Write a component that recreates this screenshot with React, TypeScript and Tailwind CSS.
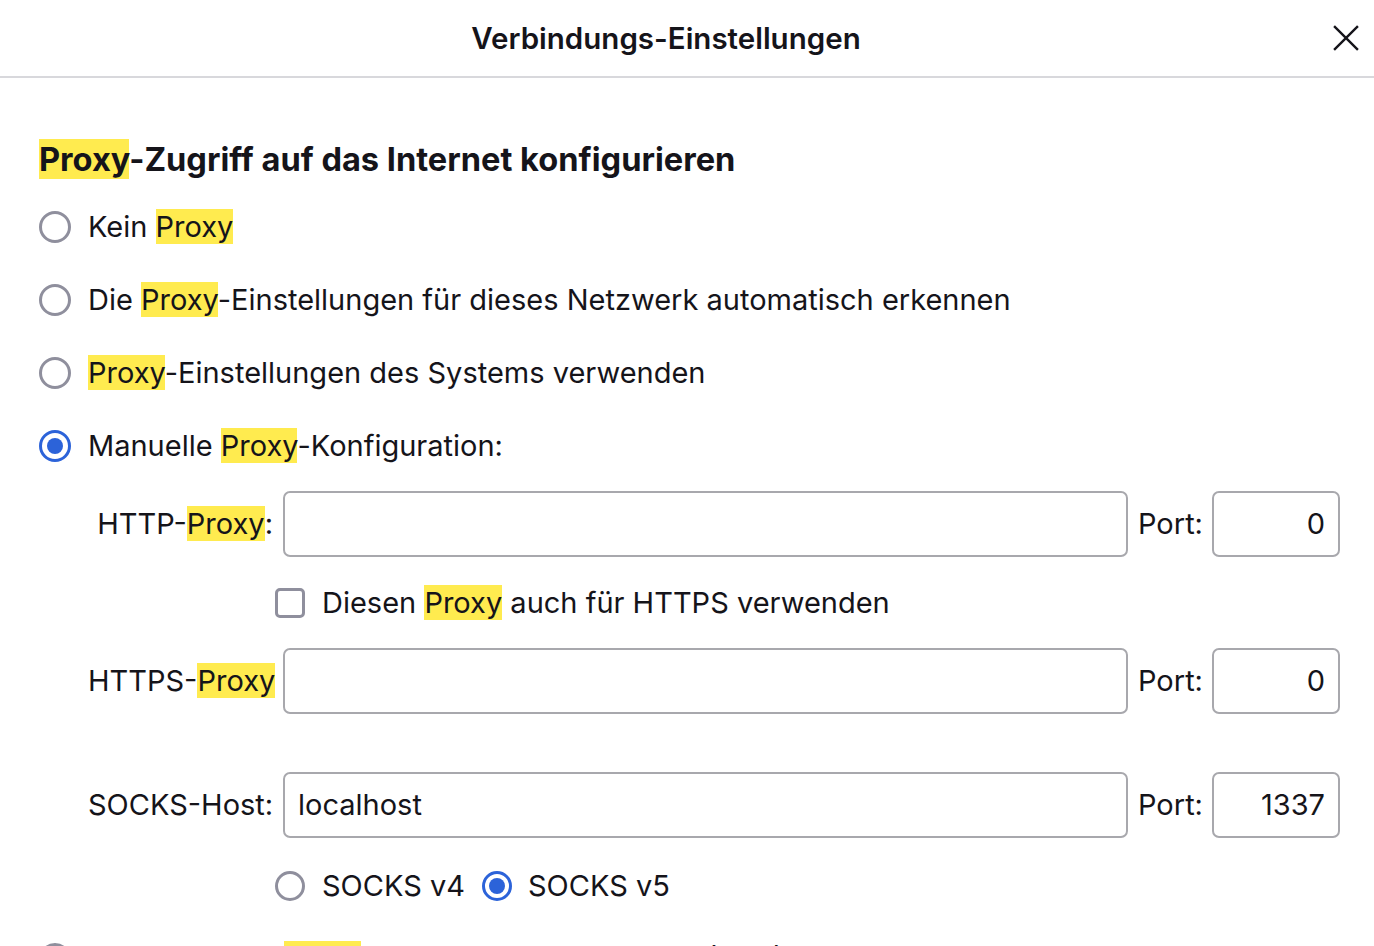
const Mark = ({ children }: { children: React.ReactNode }) => (
  <span className="bg-[#ffeb4f]">{children}</span>
);

const Radio = ({ checked = false, small = false }: { checked?: boolean; small?: boolean }) => (
  <span
    className={
      (small ? "w-[30px] h-[30px] " : "w-[32px] h-[32px] ") +
      "shrink-0 rounded-full flex items-center justify-center border-[3px] " +
      (checked ? "border-[#2c63d9]" : "border-[#8f8f9d]")
    }
  >
    {checked && <span className="w-[16px] h-[16px] rounded-full bg-[#2c63d9]" />}
  </span>
);

const TextBox = ({ value = "", align = "left" }: { value?: string; align?: "left" | "right" }) => (
  <div
    className={
      "h-[66px] border-2 border-[#a8a8ad] rounded-[7px] flex items-center px-[13px] " +
      (align === "right" ? "justify-end" : "justify-start")
    }
  >
    <span>{value}</span>
  </div>
);

const ProxyRow = ({ label, host = "", port }: { label: React.ReactNode; host?: string; port: string }) => (
  <div className="flex items-center gap-[10px]">
    <div className="w-[185px] text-right whitespace-nowrap">{label}</div>
    <div className="flex-1">
      <TextBox value={host} />
    </div>
    <div className="w-[64px] whitespace-nowrap">Port:</div>
    <div className="w-[128px]">
      <TextBox value={port} align="right" />
    </div>
  </div>
);

export default function App() {
  return (
    <div
      className="w-[1374px] h-[946px] overflow-hidden bg-white text-[#15141a]"
      style={{ fontFamily: "Inter, 'Noto Sans', sans-serif" }}
    >
      {/* Header */}
      <div className="relative h-[78px] flex items-center justify-center pr-[42px] border-b-2 border-[#d8d8dc]">
        <h1 className="text-[29.5px] font-semibold">Verbindungs-Einstellungen</h1>
        <button className="absolute right-[15px] top-[25px] w-[26px] h-[26px]">
          <svg viewBox="0 0 24 24" width="26" height="26" fill="none" stroke="#15141a" strokeWidth="2.2">
            <path d="M1 1 L23 23 M23 1 L1 23" />
          </svg>
        </button>
      </div>

      <div className="pl-[39px] pr-[34px] pt-[61px] text-[29px] leading-[36px]">
        <h2 className="text-[32.6px] leading-[40px] font-bold">
          <Mark>Proxy</Mark>-Zugriff auf das Internet konfigurieren
        </h2>

        <div className="mt-[30px] flex flex-col gap-[37px]">
          <label className="flex items-center gap-[17px]">
            <Radio />
            <span>
              Kein <Mark>Proxy</Mark>
            </span>
          </label>
          <label className="flex items-center gap-[17px]">
            <Radio />
            <span>
              Die <Mark>Proxy</Mark>-Einstellungen für dieses Netzwerk automatisch erkennen
            </span>
          </label>
          <label className="flex items-center gap-[17px]">
            <Radio />
            <span>
              <Mark>Proxy</Mark>-Einstellungen des Systems verwenden
            </span>
          </label>
          <label className="flex items-center gap-[17px]">
            <Radio checked />
            <span>
              Manuelle <Mark>Proxy</Mark>-Konfiguration:
            </span>
          </label>
        </div>

        {/* Manual configuration */}
        <div className="pl-[49px] mt-[27px] flex flex-col">
          <ProxyRow
            label={
              <>
                HTTP-<Mark>Proxy</Mark>:
              </>
            }
            port="0"
          />
          <label className="mt-[28px] pl-[187px] flex items-center gap-[17px]">
            <span className="w-[30px] h-[30px] shrink-0 border-[3px] border-[#8f8f9d] rounded-[5px]" />
            <span>
              Diesen <Mark>Proxy</Mark> auch für HTTPS verwenden
            </span>
          </label>
          <div className="mt-[27px]">
            <ProxyRow
              label={
                <>
                  HTTPS-<Mark>Proxy</Mark>
                </>
              }
              port="0"
            />
          </div>
          <div className="mt-[58px]">
            <ProxyRow label="SOCKS-Host:" host="localhost" port="1337" />
          </div>
          <div className="mt-[30px] pl-[187px] flex items-center">
            <label className="flex items-center gap-[17px]">
              <Radio small />
              <span>SOCKS v4</span>
            </label>
            <label className="ml-[17px] flex items-center gap-[16px]">
              <Radio small checked />
              <span>SOCKS v5</span>
            </label>
          </div>
        </div>

        <label className="mt-[37px] flex items-center gap-[17px]">
          <Radio />
          <span>
            Automatische <Mark>Proxy</Mark>-Konfigurations-Adresse (URL):
          </span>
        </label>
      </div>
    </div>
  );
}
